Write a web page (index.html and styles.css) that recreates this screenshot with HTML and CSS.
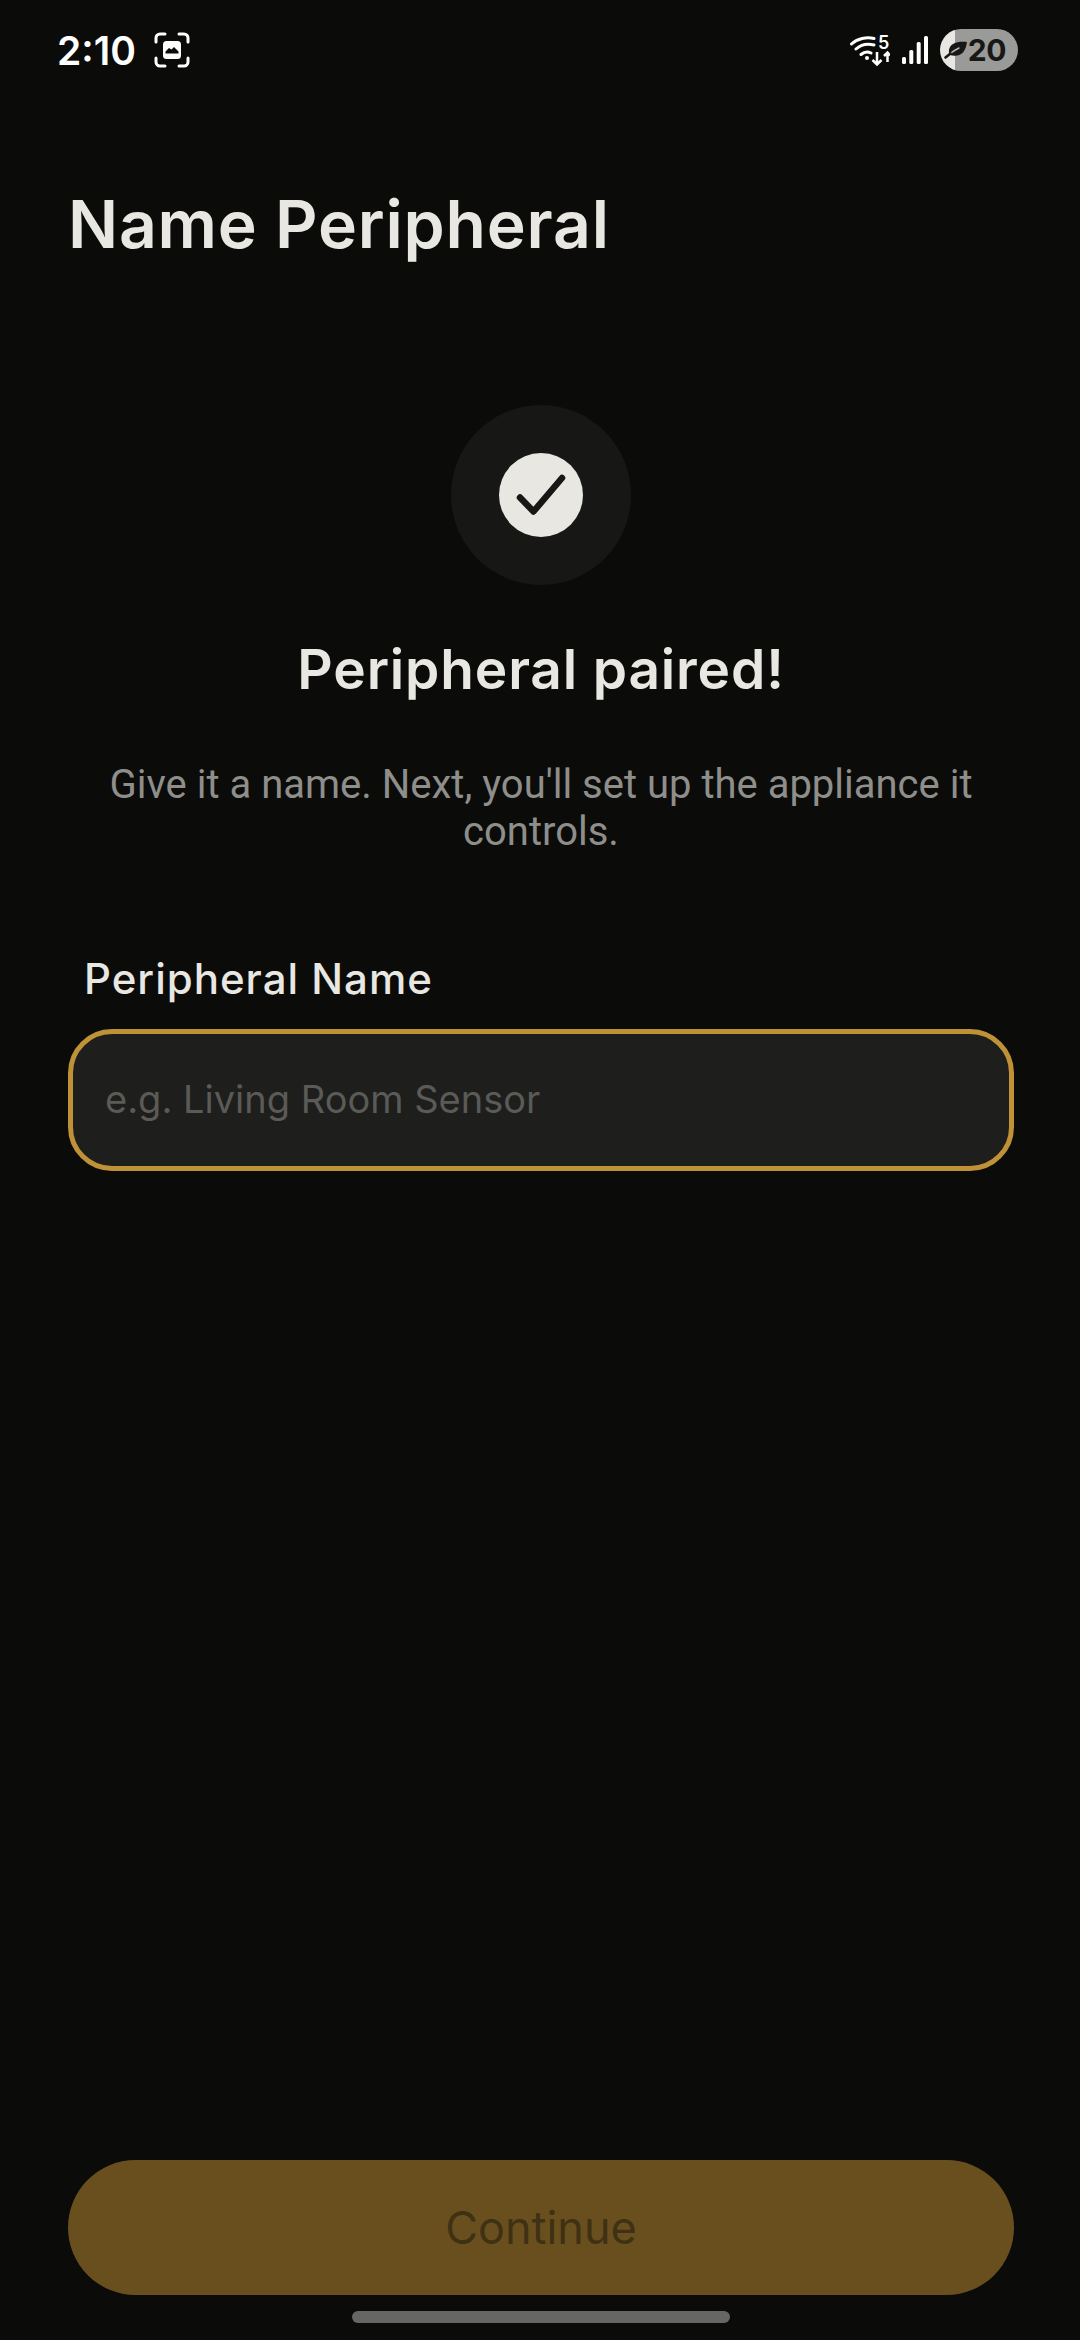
FILE: index.html
```html
<!DOCTYPE html>
<html lang="en">
<head>
    <meta charset="UTF-8">
    <meta name="viewport" content="width=device-width, initial-scale=1.0">
    <link rel="stylesheet" href="styles.css">
    <title>Name Peripheral</title>
</head>
<body>

    <div class="screen">
        <div class="status-bar">
            <div class="status-left">
                <span class="clock">2:10</span>
                <svg class="capture-icon" width="36" height="36" viewBox="0 0 36 36" fill="none">
                    <path d="M2 10V6a4 4 0 0 1 4-4h5M25 2h5a4 4 0 0 1 4 4v4M34 26v4a4 4 0 0 1-4 4h-5M11 34H6a4 4 0 0 1-4-4v-4" stroke="#fff" stroke-width="3" stroke-linecap="round"/>
                    <rect x="9" y="9" width="18" height="18" rx="3.500" fill="#fff"/>
                    <path d="M11.500 21.500v-2l3.500-3.500 2.500 1.500 2.500-2.500 4.500 4.500v2z" fill="#0b0b0a"/>
                </svg>
            </div>
            <div class="status-right">
                <div class="wifi">
                    <svg width="40" height="32" viewBox="0 0 40 32" fill="none">
                        <path d="M1.500 10C7 4.500 17 2.500 24 4.500M6 15C11 10.500 18 9.500 24 11M11 20.500C14 18 18 17.500 21 19" stroke="#fff" stroke-width="3" stroke-linecap="round"/>
                        <circle cx="17" cy="24" r="2" fill="#fff"/>
                        <path d="M27 18V30M22.500 26l4.500 4.500 4.500-4.500M37.500 28V18.500M34 22l3.500-3.500 2.500 3" stroke="#fff" stroke-width="2.500"/>
                    </svg>
                    <span class="wifi-five">5</span>
                </div>
                <svg class="signal-icon" width="26" height="28" viewBox="0 0 26 28" fill="#fff">
                    <rect x="0" y="21" width="4" height="7" rx="1.500"/>
                    <rect x="7.300" y="14" width="4" height="14" rx="1.500"/>
                    <rect x="14.700" y="6" width="4" height="22" rx="1.500"/>
                    <rect x="22" y="0" width="4" height="28" rx="1.500"/>
                </svg>
                <div class="battery">
                    <svg class="leaf-icon" width="24" height="18" viewBox="0 0 24 18" fill="none">
                        <path d="M23 1C14 0 6 2 5 9C4.700 11 5 12.500 6 14C10 15.500 17 15 20 10C22 7 22.500 4 23 1Z" fill="#171716"/>
                        <path d="M7 12C9.500 10 12 8.500 15 7" stroke="#b5b5b2" stroke-width="1.500" stroke-linecap="round"/>
                        <path d="M1.500 16.500 6.500 12.500" stroke="#171716" stroke-width="2.500" stroke-linecap="round"/>
                    </svg>
                    <span class="battery-level">20</span>
                </div>
            </div>
        </div>

        <h1 class="page-title">Name Peripheral</h1>

        <div class="paired-badge">
            <div class="paired-check">
                <svg width="84" height="84" viewBox="0 0 84 84" fill="none">
                    <path d="M21 44.500 34.500 58.500 63 25" stroke="#171716" stroke-width="6.500" stroke-linecap="round" stroke-linejoin="round"/>
                </svg>
            </div>
        </div>

        <h2 class="paired-title">Peripheral paired!</h2>
        <p class="paired-text">Give it a name. Next, you'll set up the appliance it controls.</p>

        <form class="name-form">
            <label class="field-label" for="peripheralName">Peripheral Name</label>
            <input class="field-input" type="text" id="peripheralName" placeholder="e.g. Living Room Sensor">
        </form>

        <div class="footer">
            <button class="continue-btn" type="button" disabled>Continue</button>
            <div class="home-bar"></div>
        </div>
    </div>

</body>
</html>
```

FILE: styles.css
```css
body {
    margin: 0;
    padding: 0;
    background-color: #0b0b0a;
    font-family: 'Inter', sans-serif;
}

.screen {
    width: 1080px;
    height: 2340px;
    display: flex;
    flex-direction: column;
    box-sizing: border-box;
    padding: 0 66px 0 68px;
    overflow: hidden;
}

.status-bar {
    height: 100px;
    margin: 0 -4px 0 -11px;
    display: flex;
    justify-content: space-between;
    align-items: center;
}

.status-left {
    display: flex;
    align-items: center;
    gap: 18px;
}

.clock {
    color: #fff;
    font-size: 39px;
    font-weight: 600;
}

.status-right {
    display: flex;
    align-items: center;
    gap: 12px;
}

.wifi {
    position: relative;
    width: 40px;
    height: 32px;
}

.wifi-five {
    position: absolute;
    left: 28px;
    top: -1px;
    color: #fff;
    font-size: 18px;
    line-height: 20px;
    font-weight: 600;
}

.battery {
    position: relative;
    width: 78px;
    height: 42px;
    border-radius: 21px;
    display: flex;
    align-items: center;
    justify-content: flex-end;
    padding-right: 12px;
    box-sizing: border-box;
    background: linear-gradient(to right, #e8e7e2 15px, #9a9a98 15px);
}

.leaf-icon {
    position: absolute;
    left: 4px;
    top: 12px;
}

.battery-level {
    color: #171716;
    font-size: 30px;
    font-weight: 700;
    letter-spacing: -0.500px;
}

.page-title {
    margin: 84px 0 0;
    color: #e8e7e2;
    font-size: 66px;
    line-height: 80px;
    font-weight: 600;
    letter-spacing: 0.800px;
}

.paired-badge {
    width: 180px;
    height: 180px;
    margin: 141px auto 0;
    border-radius: 50%;
    background-color: #171716;
    display: flex;
    align-items: center;
    justify-content: center;
}

.paired-check {
    width: 84px;
    height: 84px;
    border-radius: 50%;
    background-color: #e8e7e2;
}

.paired-title {
    margin: 52px 0 0;
    color: #e8e7e2;
    font-size: 55px;
    line-height: 64px;
    font-weight: 600;
    letter-spacing: 0.850px;
    text-align: center;
}

.paired-text {
    margin: 60px 0 0;
    color: #8e8e8a;
    font-family: 'Roboto', sans-serif;
    font-size: 40px;
    line-height: 47px;
    text-align: center;
}

.name-form {
    margin-top: 98px;
}

.field-label {
    display: block;
    margin: 0 0 24px 16px;
    color: #e8e7e2;
    font-size: 42px;
    line-height: 52px;
    font-weight: 500;
    letter-spacing: 1px;
}

.field-input {
    display: block;
    width: 100%;
    height: 142px;
    box-sizing: border-box;
    padding: 0 32px 2px;
    border: 5px solid #c09238;
    border-radius: 44px;
    background-color: #1e1e1d;
    color: #e8e7e2;
    font-family: 'Inter', sans-serif;
    font-size: 38px;
    outline: none;
}

.field-input::placeholder {
    color: #5a5a57;
    opacity: 1;
}

.footer {
    margin-top: auto;
    padding-bottom: 17px;
}

.continue-btn {
    display: block;
    width: 100%;
    height: 135px;
    border: none;
    border-radius: 68px;
    background-color: #6a4f1e;
    color: #3f3114;
    font-family: 'Inter', sans-serif;
    font-size: 45px;
}

.home-bar {
    width: 378px;
    height: 12px;
    margin: 16px auto 0;
    border-radius: 6px;
    background-color: #666665;
}
```
